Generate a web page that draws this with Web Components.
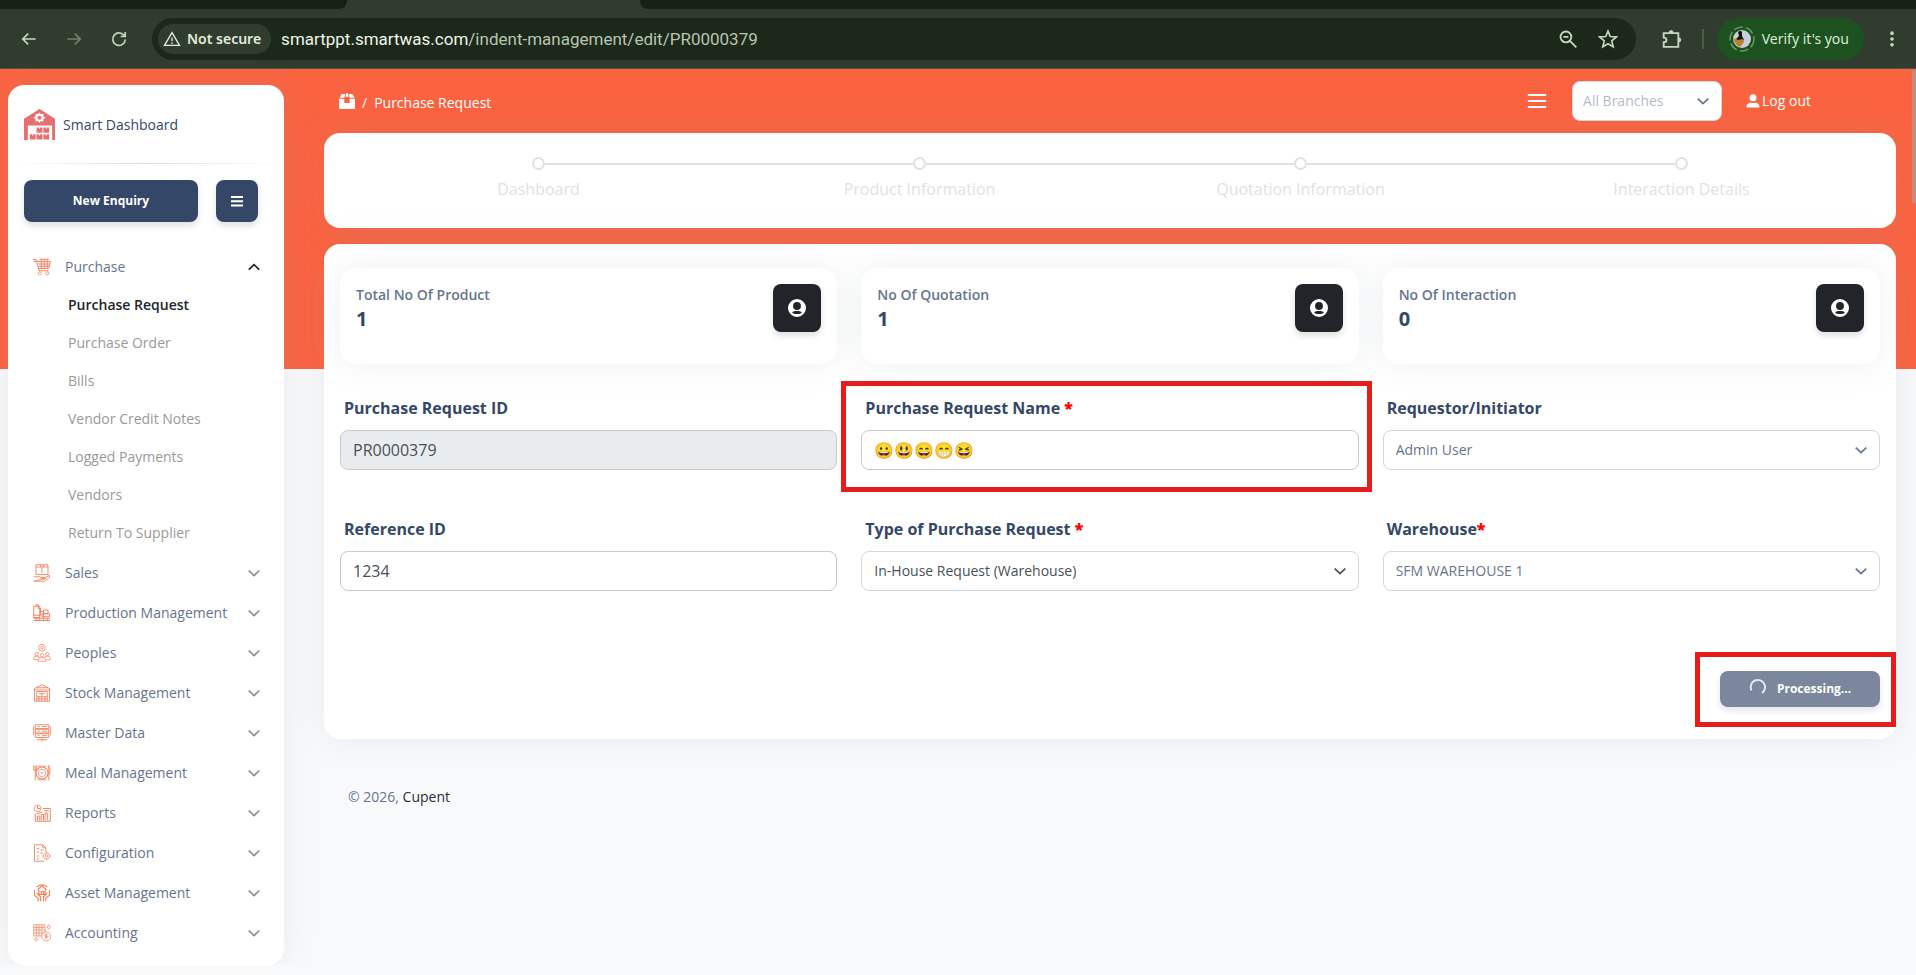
<!DOCTYPE html>
<html lang="en">
<head>
<meta charset="utf-8">
<title>Purchase Request</title>
<style>
  :root {
    --orange: #fb6340;
    --navy: #344767;
    --slate: #67748e;
    --border: #d2d6da;
    --red: #e71d1d;
    --page: #f8f9fa;
    --shadow: 0 0 32px rgba(136, 152, 170, .15);
  }
  body {
    margin: 0;
    background: var(--page);
    color: var(--slate);
    font-family: "Open Sans", "Noto Sans", sans-serif;
    font-size: 14px;
    line-height: 24px;
  }
</style>
</head>
<body>
<browser-bar url-host="smartppt.smartwas.com" url-path="/indent-management/edit/PR0000379"></browser-bar>
<app-shell>
  <side-nav slot="nav" brand="Smart Dashboard">
    <nav-group icon="cart" label="Purchase" open>
      <nav-link active>Purchase Request</nav-link>
      <nav-link>Purchase Order</nav-link>
      <nav-link>Bills</nav-link>
      <nav-link>Vendor Credit Notes</nav-link>
      <nav-link>Logged Payments</nav-link>
      <nav-link>Vendors</nav-link>
      <nav-link>Return To Supplier</nav-link>
    </nav-group>
    <nav-group icon="sales" label="Sales"></nav-group>
    <nav-group icon="production" label="Production Management"></nav-group>
    <nav-group icon="peoples" label="Peoples"></nav-group>
    <nav-group icon="stock" label="Stock Management"></nav-group>
    <nav-group icon="master" label="Master Data"></nav-group>
    <nav-group icon="meal" label="Meal Management"></nav-group>
    <nav-group icon="reports" label="Reports"></nav-group>
    <nav-group icon="config" label="Configuration"></nav-group>
    <nav-group icon="asset" label="Asset Management"></nav-group>
    <nav-group icon="accounting" label="Accounting"></nav-group>
  </side-nav>

  <top-bar>Purchase Request</top-bar>

  <step-bar>
    <step-item>Dashboard</step-item>
    <step-item>Product Information</step-item>
    <step-item>Quotation Information</step-item>
    <step-item last>Interaction Details</step-item>
  </step-bar>

  <request-form>
    <stat-card slot="stats" label="Total No Of Product" value="1"></stat-card>
    <stat-card slot="stats" label="No Of Quotation" value="1"></stat-card>
    <stat-card slot="stats" label="No Of Interaction" value="0"></stat-card>

    <form-field label="Purchase Request ID" value="PR0000379" disabled></form-field>
    <form-field label="Purchase Request Name " value="😀😃😄😁😆" required marked></form-field>
    <form-field label="Requestor/Initiator" value="Admin User" type="select"></form-field>
    <form-field label="Reference ID" value="1234"></form-field>
    <form-field label="Type of Purchase Request " value="In-House Request (Warehouse)" type="select" dark required></form-field>
    <form-field label="Warehouse" value="SFM WAREHOUSE 1" type="select" required></form-field>

    <busy-button slot="actions">Processing...</busy-button>
  </request-form>

  <page-footer>© 2026, <a href="#">Cupent</a></page-footer>
</app-shell>

<script>
const ICONS = {
  // browser toolbar
  back: '<path d="M20 12H5M11 5.500l-6.500 6.500 6.500 6.500" stroke-width="2"/>',
  forward: '<path d="M4 12h15M13 5.500l6.500 6.500-6.500 6.500" stroke-width="2"/>',
  reload: '<path d="M18.500 8.500A7.500 7.500 0 1 0 19.500 12.500M19.500 3.500v5.500h-5.500" stroke-width="2"/>',
  warning: '<path d="M12 3.500L22 20.500H2z M12 10v5 M12 16.500v2" stroke-width="1.800"/>',
  zoomOut: '<circle cx="9.500" cy="9.500" r="6.500" stroke-width="2.200"/><path d="M14 14l8 8M6.500 9.500h6" stroke-width="2.200"/>',
  star: '<path d="M12 2.500l2.700 6.500 7.300.600-5.500 4.700 1.700 7L12 17.700l-6.200 3.600 1.700-7L2 9.600l7.300-.600z" stroke-width="2"/>',
  puzzle: '<path d="M4 5.500h16v5.500v9.500H4v-5c2.500 0 3-1 3-2.500s-.500-2.500-3-2.500z" stroke-width="2"/><path d="M10 5a2.200 2.200 0 0 1 4.400 0zM20.500 10.800a2.200 2.200 0 0 1 0 4.400z" fill="currentColor"/>',
  dots: '<g fill="currentColor" stroke="none"><circle cx="12" cy="5" r="2.200"/><circle cx="12" cy="12" r="2.200"/><circle cx="12" cy="19" r="2.200"/></g>',
  // page controls
  chevron: '<path d="M3 8l9 8.500L21 8" stroke-width="3"/>',
  chevronUp: '<path d="M3 16.500L12 8l9 8.500" stroke-width="3"/>',
  bars: '<path d="M0 4h24M0 12.500h24M0 21h24" stroke-width="4"/>',
  menu: '<path d="M1 4.800h22M1 12h22M1 19.200h22" stroke-width="2.400"/>',
  user: '<g fill="currentColor" stroke="none"><circle cx="12" cy="6.500" r="6"/><path d="M1 23v-2c0-4 4-6 6.500-6.500 3 1.500 6 1.500 9 0C19 15 23 17 23 21v2z"/></g>',
  box: '<path fill="currentColor" stroke="none" d="M4 1.500h5.500L8 7H1zM14.500 1.500H20L23.500 7H16zM10.800 0h2.400l1 6h-4.400zM0 8.500h8v6.500h8V8.500h8V24H0z"/>',
  badge: '<path fill="currentColor" fill-rule="evenodd" stroke="none" d="M12 0a12 12 0 1 0 0 24 12 12 0 0 0 0-24zM12 4a5 5 0 1 1 0 10.500 5 5 0 0 1 0-10.500zM5.500 17.500c2-2 11-2 13 0-1 3.500-12 3.500-13 0z"/>',
  logo: '<g fill="currentColor" stroke="none"><path fill-rule="evenodd" d="M16 0L32 10v22h-3V17H4v15H0V10zM16 3.500l-1.500 2-2.500-.5v2.500l-2 1.500 2 1.700v2.300l2.500-.500 1.500 2 1.500-2 2.500.500v-2.300l2-1.700-2-1.500V5l-2.500.5z"/><circle cx="16" cy="9" r="2"/><path d="M13 19h2.500v1.300h1V19H19v5.500h-6zM20 19h2.500v1.300h1V19H26v5.500h-6zM6 26h2.500v1.300h1V26H12v5.500H6zM13 26h2.500v1.300h1V26H19v5.500h-6zM20 26h2.500v1.300h1V26H26v5.500h-6z"/></g>',
  // navigation groups
  cart: '<path stroke-width="1.300" d="M0 2h4l4 15h13M1 4.500h3M5.500 4.500H23l-2 9.500H8M6.500 8h16M7.500 11h14M11 1.500v12M15 1.500v12M19 1.500v12M9 1.500h12"/><circle cx="9" cy="20.500" r="2"/><circle cx="19" cy="20.500" r="2"/>',
  sales: '<path stroke-width="1.200" d="M4 1h16v13H4zM4 4h16M12 4v8M10 1v3M14 1v3M1 17h4c3-1 5 1 7 1h4v2h-6M16 19l6-4v3l-7 5H1z"/>',
  production: '<path stroke-width="1.300" d="M1 3h8v15H1zM3 1h4v5h3v9H1M10 10h4v8M14 8h6v5h-6zM12 13h10v4H12zM1 19h22M1 22h22M4 19v4M9 19v4M14 19v4M19 19v4"/>',
  peoples: '<circle cx="12" cy="5" r="4.500"/><circle cx="12" cy="5" r="1.800"/><circle cx="5" cy="13.500" r="2.300"/><circle cx="19" cy="13.500" r="2.300"/><circle cx="12" cy="15" r="2.300"/><path d="M1 21v-2q0-3 4-3t3 3M23 21v-2q0-3-4-3t-3 3M7 23v-2q1-3 5-3t5 3v2zM1 21h6M17 21h6"/>',
  stock: '<path stroke-width="1.200" d="M2 23V6l10-5 10 5v17zM2 8h20M5 23V10h14v13M8 13h8M8 16v7M12 13v10M16 16v7M5 17h14M5 20h14M4 5h16"/>',
  master: '<path stroke-width="1.200" d="M3 1h18v5H3zM3 7h18v5H3zM3 13h18v5H3zM1 3v12M23 3v12M6 3.500h3M12 3.500h7M6 9.500h3M12 9.500h7M6 15.500h3M12 15.500h7M12 18v5M5 21h14"/>',
  meal: '<circle cx="12" cy="12" r="8" stroke-width="1.400"/><circle cx="12" cy="12" r="5"/><path stroke-width="1.200" d="M1 2v6h4V2M3 2v20M21 22V2q3 4 1 12M6 3h12M6 21h12M10 11q2 3 4 0"/>',
  reports: '<circle cx="6" cy="6" r="4.500"/><path stroke-width="1.300" d="M6 6V2M6 6h4M13 6h10v17H3V13M15 9h6M6 22v-6h3v6M11 22v-8h3v8M16 22V12h3v10M5 13l7-2"/>',
  config: '<path stroke-width="1.200" d="M2 1h11l4 4v5M2 1v22h13M13 1v4h4M5 6h3M10 8h4M5 11h3M10 12h3M5 16h3M5 20h3"/><circle cx="18" cy="16" r="4"/><circle cx="18" cy="16" r="1.500"/><path d="M18 10v2M18 20v2M12 16h2M22 16h2"/>',
  asset: '<path stroke-width="1.600" d="M6 8l6-6 6 6M8 8v6h8V8M11 14v-4h3v4M5 4q7-6 14 0M2 8v7l5 4v4M5 12l5 5v6M22 8v7l-5 4v4M19 12l-5 5v6"/>',
  accounting: '<path d="M1 1h15v15H1zM1 4.500h15M1 8h15M1 12h15M4.500 1v15M8 1v15M12 1v15M21 1l2 3-2 3-2-3zM4 18l2 3-2 2-2-2z"/><circle cx="17.500" cy="16.500" r="6" fill="#fff"/><path d="M19.500 14.500q-4-1.500-4 .500t4 1.500-4 2M17.500 12.500v8"/>'
};

class AppIcon extends HTMLElement {
  constructor() {
    super();
    this.attachShadow({ mode: 'open' });
  }
  connectedCallback() {
    const name = this.getAttribute('name');
    const box = name === 'logo' ? 32 : 24;
    this.shadowRoot.innerHTML = `
      <style>
        :host { display: block; flex: none; width: 16px; height: 16px; }
        svg { display: block; width: 100%; height: 100%; }
      </style>
      <svg viewBox="0 0 ${box} ${box}" fill="none" stroke="currentColor" aria-hidden="true">${ICONS[name]}</svg>
    `;
  }
}
customElements.define('app-icon', AppIcon);

class BrowserBar extends HTMLElement {
  constructor() {
    super();
    this.attachShadow({ mode: 'open' });
    this.shadowRoot.innerHTML = `
      <style>
        :host {
          display: block;
          background: #303d2e;
          border-bottom: 1px solid #4a5548;
          color: #c5d8bf;
          font-family: "Noto Sans", sans-serif;
        }
        .tabs { display: flex; height: 9px; background: #303d2e; }
        .left { width: 347px; background: #172214; border-radius: 0 0 8px 0; }
        .right { flex: 1; background: #172214; border-radius: 0 0 0 8px; }
        .tab { width: 293px; }
        .row { display: flex; align-items: center; height: 59px; }
        button { display: block; padding: 0; border: 0; background: none; color: inherit; font: inherit; }
        .nav { display: flex; gap: 25px; padding: 0 23px 0 19px; }
        app-icon { width: 20px; height: 20px; }
        .forward { opacity: .45; }
        .omni {
          flex: 1;
          display: flex;
          align-items: center;
          box-sizing: border-box;
          height: 42px;
          padding: 0 18px 0 6px;
          border-radius: 21px;
          background: #1c281a;
        }
        .chip {
          display: flex;
          align-items: center;
          gap: 6px;
          height: 30px;
          padding: 0 10px 0 5px;
          margin-right: 10px;
          border-radius: 15px;
          background: #303d2e;
          color: #e2ecdd;
          font-size: 14px;
          font-weight: 600;
        }
        .chip app-icon { width: 18px; height: 18px; }
        .url { flex: 1; color: #b7c5b1; font: 17px/24px Roboto, sans-serif; }
        .url b { font-weight: 400; color: #eef5ea; }
        .tools { display: flex; gap: 20px; }
        .ext { margin: 0 20px 0 24px; }
        .ext app-icon { width: 22px; height: 22px; }
        .rule { width: 2px; height: 20px; background: #4b5c48; }
        .profile {
          display: flex;
          align-items: center;
          gap: 7px;
          height: 42px;
          margin: 0 18px 0 13px;
          padding: 0 15px 0 12px;
          border-radius: 21px;
          background: #1e5120;
          color: #d5ecce;
          font-size: 14px;
        }
        .profile svg { display: block; }
        .more { margin-right: 14px; }
      </style>
      <div class="tabs"><div class="left"></div><div class="tab"></div><div class="right"></div></div>
      <div class="row">
        <div class="nav">
          <button aria-label="Back"><app-icon name="back"></app-icon></button>
          <button aria-label="Forward" class="forward"><app-icon name="forward"></app-icon></button>
          <button aria-label="Reload"><app-icon name="reload"></app-icon></button>
        </div>
        <div class="omni">
          <button class="chip"><app-icon name="warning"></app-icon>Not secure</button>
          <div class="url"><b></b><span></span></div>
          <div class="tools">
            <button aria-label="Zoom"><app-icon name="zoomOut"></app-icon></button>
            <button aria-label="Bookmark"><app-icon name="star"></app-icon></button>
          </div>
        </div>
        <button class="ext" aria-label="Extensions"><app-icon name="puzzle"></app-icon></button>
        <div class="rule"></div>
        <button class="profile">
          <svg width="26" height="26" viewBox="0 0 26 26">
            <circle cx="13" cy="13" r="12" fill="none" stroke="#5f9c5c" stroke-width="1.500" stroke-dasharray="9 3"/>
            <circle cx="13" cy="13" r="9" fill="#c9cdd6"/>
            <path d="M9 6q3-2 4 0l0 4 2 4-5 2-3-3 3-3z" fill="#15130f"/>
            <path d="M4 12l5 2 5-1 1 3-4 5q-5-2-7-9z" fill="#b9802f"/>
          </svg>
          Verify it's you
        </button>
        <button class="more" aria-label="Menu"><app-icon name="dots"></app-icon></button>
      </div>
    `;
  }
  connectedCallback() {
    this.shadowRoot.querySelector('.url b').textContent = this.getAttribute('url-host');
    this.shadowRoot.querySelector('.url span').textContent = this.getAttribute('url-path');
  }
}
customElements.define('browser-bar', BrowserBar);

class AppShell extends HTMLElement {
  constructor() {
    super();
    this.attachShadow({ mode: 'open' });
    this.shadowRoot.innerHTML = `
      <style>
        :host {
          display: flex;
          align-items: flex-start;
          gap: 40px;
          position: relative;
          padding: 0 20px 0 8px;
          background: linear-gradient(var(--orange), var(--orange)) no-repeat 0 0 / 100% 300px;
        }
        main { flex: 1; min-width: 0; }
        .thumb {
          position: absolute;
          top: 1px;
          right: 0;
          width: 4px;
          height: 133px;
          border-radius: 2px 0 0 2px;
          background: #c78b7d;
        }
      </style>
      <slot name="nav"></slot>
      <main><slot></slot></main>
      <div class="thumb"></div>
    `;
  }
}
customElements.define('app-shell', AppShell);

class SideNav extends HTMLElement {
  constructor() {
    super();
    this.attachShadow({ mode: 'open' });
    this.shadowRoot.innerHTML = `
      <style>
        :host {
          display: block;
          flex: none;
          box-sizing: border-box;
          width: 276px;
          margin-top: 16px;
          padding-bottom: 12px;
          border-radius: 16px;
          background: #fff;
          box-shadow: var(--shadow);
        }
        .brand {
          display: flex;
          align-items: center;
          gap: 8px;
          padding: 24px 16px 23px;
          color: var(--navy);
          font-weight: 500;
          text-decoration: none;
        }
        .brand app-icon { width: 31px; height: 31px; color: #e86f6f; }
        hr {
          height: 1px;
          margin: 0 0 16px;
          border: 0;
          background: linear-gradient(90deg, transparent, #dcdee0, transparent);
        }
        .actions { display: flex; gap: 18px; padding: 0 26px 25px 16px; }
        button {
          display: grid;
          place-items: center;
          height: 42px;
          padding: 0;
          border: 0;
          border-radius: 8px;
          background: var(--navy);
          box-shadow: 0 4px 6px rgba(50, 50, 93, .15);
          color: #fff;
          font: 700 12px/24px "Open Sans", sans-serif;
        }
        .new { flex: 1; }
        .toggle { width: 42px; }
        .toggle app-icon { width: 12px; height: 12px; }
      </style>
      <a class="brand" href="#"><app-icon name="logo"></app-icon><span></span></a>
      <hr>
      <div class="actions">
        <button class="new">New Enquiry</button>
        <button class="toggle" aria-label="Toggle menu"><app-icon name="bars"></app-icon></button>
      </div>
      <nav><slot></slot></nav>
    `;
  }
  connectedCallback() {
    this.shadowRoot.querySelector('.brand span').textContent = this.getAttribute('brand');
  }
}
customElements.define('side-nav', SideNav);

class NavGroup extends HTMLElement {
  constructor() {
    super();
    this.attachShadow({ mode: 'open' });
  }
  connectedCallback() {
    const open = this.hasAttribute('open');
    this.shadowRoot.innerHTML = `
      <style>
        :host { display: block; }
        button {
          display: flex;
          align-items: center;
          gap: 14px;
          width: 100%;
          height: 40px;
          padding: 0 23px 0 25px;
          border: 0;
          background: none;
          color: var(--slate);
          font: inherit;
          text-align: left;
        }
        span { flex: 1; }
        .mark { width: 18px; height: 18px; color: #f4825f; }
        .arrow { width: 14px; height: 14px; color: ${open ? '#212529' : '#8f8f8f'}; }
      </style>
      <button aria-expanded="${open}">
        <app-icon class="mark" name="${this.getAttribute('icon')}"></app-icon>
        <span>${this.getAttribute('label')}</span>
        <app-icon class="arrow" name="${open ? 'chevronUp' : 'chevron'}"></app-icon>
      </button>
      <slot></slot>
    `;
  }
}
customElements.define('nav-group', NavGroup);

class NavLink extends HTMLElement {
  constructor() {
    super();
    this.attachShadow({ mode: 'open' });
    this.shadowRoot.innerHTML = `
      <style>
        :host { display: block; }
        a { display: block; padding: 6px 0 8px 60px; color: #999; text-decoration: none; }
        :host([active]) a { color: #212529; font-weight: 600; }
      </style>
      <a href="#"><slot></slot></a>
    `;
  }
}
customElements.define('nav-link', NavLink);

class TopBar extends HTMLElement {
  constructor() {
    super();
    this.attachShadow({ mode: 'open' });
    this.shadowRoot.innerHTML = `
      <style>
        :host {
          display: flex;
          align-items: center;
          height: 64px;
          padding: 0 85px 0 15px;
          color: #fff;
        }
        .crumbs { flex: 1; display: flex; align-items: center; gap: 7px; }
        .crumbs span { padding-top: 4px; }
        a { display: flex; align-items: center; gap: 3px; color: inherit; text-decoration: none; }
        button { display: block; padding: 0; border: 0; background: none; color: inherit; }
        .menu app-icon { width: 20px; height: 20px; }
        .select { display: grid; align-items: center; width: 150px; margin: 0 24px 0 25px; }
        select {
          grid-area: 1 / 1;
          appearance: none;
          height: 40px;
          padding: 0 10px;
          border: 1px solid var(--border);
          border-radius: 8px;
          background: #fff;
          color: #b3bac7;
          font: inherit;
        }
        .select app-icon {
          grid-area: 1 / 1;
          justify-self: end;
          width: 14px;
          height: 14px;
          margin-right: 12px;
          color: var(--slate);
          pointer-events: none;
        }
        .logout { gap: 2px; font-weight: 500; }
        .logout app-icon { width: 14px; height: 14px; }
      </style>
      <div class="crumbs">
        <a href="#" aria-label="Home"><app-icon name="box"></app-icon></a>
        <span>/</span>
        <span><slot></slot></span>
      </div>
      <button class="menu" aria-label="Menu"><app-icon name="menu"></app-icon></button>
      <div class="select">
        <select aria-label="Branch"><option>All Branches</option></select>
        <app-icon name="chevron"></app-icon>
      </div>
      <a class="logout" href="#"><app-icon name="user"></app-icon>Log out</a>
    `;
  }
}
customElements.define('top-bar', TopBar);

class StepBar extends HTMLElement {
  constructor() {
    super();
    this.attachShadow({ mode: 'open' });
    this.shadowRoot.innerHTML = `
      <style>
        :host {
          display: flex;
          padding: 24px 24px 27px;
          border-radius: 16px;
          background: #fff;
          box-shadow: var(--shadow);
        }
        ::slotted(*) { flex: 1; }
      </style>
      <slot></slot>
    `;
  }
}
customElements.define('step-bar', StepBar);

class StepItem extends HTMLElement {
  constructor() {
    super();
    this.attachShadow({ mode: 'open' });
    this.shadowRoot.innerHTML = `
      <style>
        :host { display: block; color: #dee2e6; font-size: 16px; text-align: center; }
        .track { display: grid; grid-template-columns: 1fr 13px 1fr; align-items: center; margin-bottom: 7px; }
        i { height: 2px; background: #dee2e6; }
        .dot { box-sizing: border-box; height: 13px; border: 2px solid #dee2e6; border-radius: 50%; }
        :host(:first-child) i:first-child, :host([last]) i:last-child { background: none; }
      </style>
      <div class="track"><i></i><div class="dot"></div><i></i></div>
      <slot></slot>
    `;
  }
}
customElements.define('step-item', StepItem);

class RequestForm extends HTMLElement {
  constructor() {
    super();
    this.attachShadow({ mode: 'open' });
    this.shadowRoot.innerHTML = `
      <style>
        :host {
          display: block;
          margin-top: 16px;
          padding: 24px 16px 32px;
          border-radius: 16px;
          background: #fff;
          box-shadow: var(--shadow);
        }
        .grid { display: grid; grid-template-columns: repeat(3, 1fr); gap: 47px 24px; }
        .fields { margin-top: 32px; }
        .actions { display: flex; justify-content: flex-end; margin-top: 80px; }
      </style>
      <div class="grid"><slot name="stats"></slot></div>
      <form>
        <div class="grid fields"><slot></slot></div>
        <div class="actions"><slot name="actions"></slot></div>
      </form>
    `;
  }
}
customElements.define('request-form', RequestForm);

class StatCard extends HTMLElement {
  constructor() {
    super();
    this.attachShadow({ mode: 'open' });
  }
  connectedCallback() {
    this.shadowRoot.innerHTML = `
      <style>
        :host {
          display: flex;
          justify-content: space-between;
          padding: 16px 16px 32px;
          border-radius: 16px;
          background: #fff;
          box-shadow: var(--shadow);
        }
        p { margin: 0; font-weight: 600; line-height: 22px; }
        h5 { margin: 0; color: var(--navy); font-size: 20px; font-weight: 700; line-height: 26px; }
        .tile {
          display: grid;
          place-items: center;
          width: 48px;
          height: 48px;
          border-radius: 8px;
          background: #212529;
          box-shadow: 0 4px 6px rgba(0, 0, 0, .12);
          color: #fff;
        }
        .tile app-icon { width: 18px; height: 18px; }
      </style>
      <div><p>${this.getAttribute('label')}</p><h5>${this.getAttribute('value')}</h5></div>
      <div class="tile"><app-icon name="badge"></app-icon></div>
    `;
  }
}
customElements.define('stat-card', StatCard);

class FormField extends HTMLElement {
  constructor() {
    super();
    this.attachShadow({ mode: 'open' });
  }
  connectedCallback() {
    const value = this.getAttribute('value');
    const star = this.hasAttribute('required') ? '<b>*</b>' : '';
    const control = this.getAttribute('type') === 'select'
      ? `<select id="control"><option>${value}</option></select><app-icon name="chevron"></app-icon>`
      : `<input id="control" type="text" value="${value}" ${this.hasAttribute('disabled') ? 'disabled' : ''}>`;
    this.shadowRoot.innerHTML = `
      <style>
        :host { display: block; position: relative; }
        label {
          display: block;
          margin: 0 4px 10px;
          color: var(--navy);
          font-size: 16px;
          font-weight: 700;
          white-space: pre;
        }
        b { color: #f00; }
        .control { display: grid; align-items: center; }
        input, select {
          grid-area: 1 / 1;
          box-sizing: border-box;
          width: 100%;
          height: 40px;
          padding: 0 12px;
          border: 1px solid var(--border);
          border-radius: 8px;
          background: #fff;
          color: #495057;
          font: inherit;
        }
        input { border-color: #c9c9c9; font-size: 16px; }
        input:disabled { background: #e9ecef; }
        select { appearance: none; color: var(--slate); }
        app-icon {
          grid-area: 1 / 1;
          justify-self: end;
          width: 14px;
          height: 14px;
          margin-right: 12px;
          color: var(--slate);
          pointer-events: none;
        }
        :host([dark]) select, :host([dark]) app-icon { color: #495057; }
        /* attention frame around the field */
        :host([marked])::after {
          content: "";
          position: absolute;
          inset: -15px -13px -22px -20px;
          border: 5px solid var(--red);
          pointer-events: none;
        }
      </style>
      <label for="control">${this.getAttribute('label')}${star}</label>
      <div class="control">${control}</div>
    `;
  }
}
customElements.define('form-field', FormField);

class BusyButton extends HTMLElement {
  constructor() {
    super();
    this.attachShadow({ mode: 'open' });
    this.shadowRoot.innerHTML = `
      <style>
        :host { display: block; position: relative; }
        :host::after {
          content: "";
          position: absolute;
          inset: -19px -16px -20px -25px;
          border: 5px solid var(--red);
          pointer-events: none;
        }
        button {
          display: flex;
          align-items: center;
          justify-content: center;
          gap: 10px;
          width: 160px;
          height: 36px;
          padding: 0;
          border: 0;
          border-radius: 8px;
          background: #7b879d;
          box-shadow: 0 4px 6px rgba(50, 50, 93, .12);
          color: #fff;
          font: 700 12px/24px "Open Sans", sans-serif;
        }
        svg { display: block; margin-bottom: 4px; }
      </style>
      <button type="button" disabled>
        <svg width="18" height="18" viewBox="0 0 18 18" fill="none" stroke="#e4e7ec" stroke-width="2" aria-hidden="true">
          <path d="M2.500 12.500A7.200 7.200 0 1 1 13 15"/>
        </svg>
        <slot></slot>
      </button>
    `;
  }
}
customElements.define('busy-button', BusyButton);

class PageFooter extends HTMLElement {
  constructor() {
    super();
    this.attachShadow({ mode: 'open' });
    this.shadowRoot.innerHTML = `
      <style>
        :host { display: block; padding: 46px 24px 24px; }
        ::slotted(a) { color: #252f40; font-weight: 500; text-decoration: none; }
      </style>
      <footer><slot></slot></footer>
    `;
  }
}
customElements.define('page-footer', PageFooter);
</script>
</body>
</html>
